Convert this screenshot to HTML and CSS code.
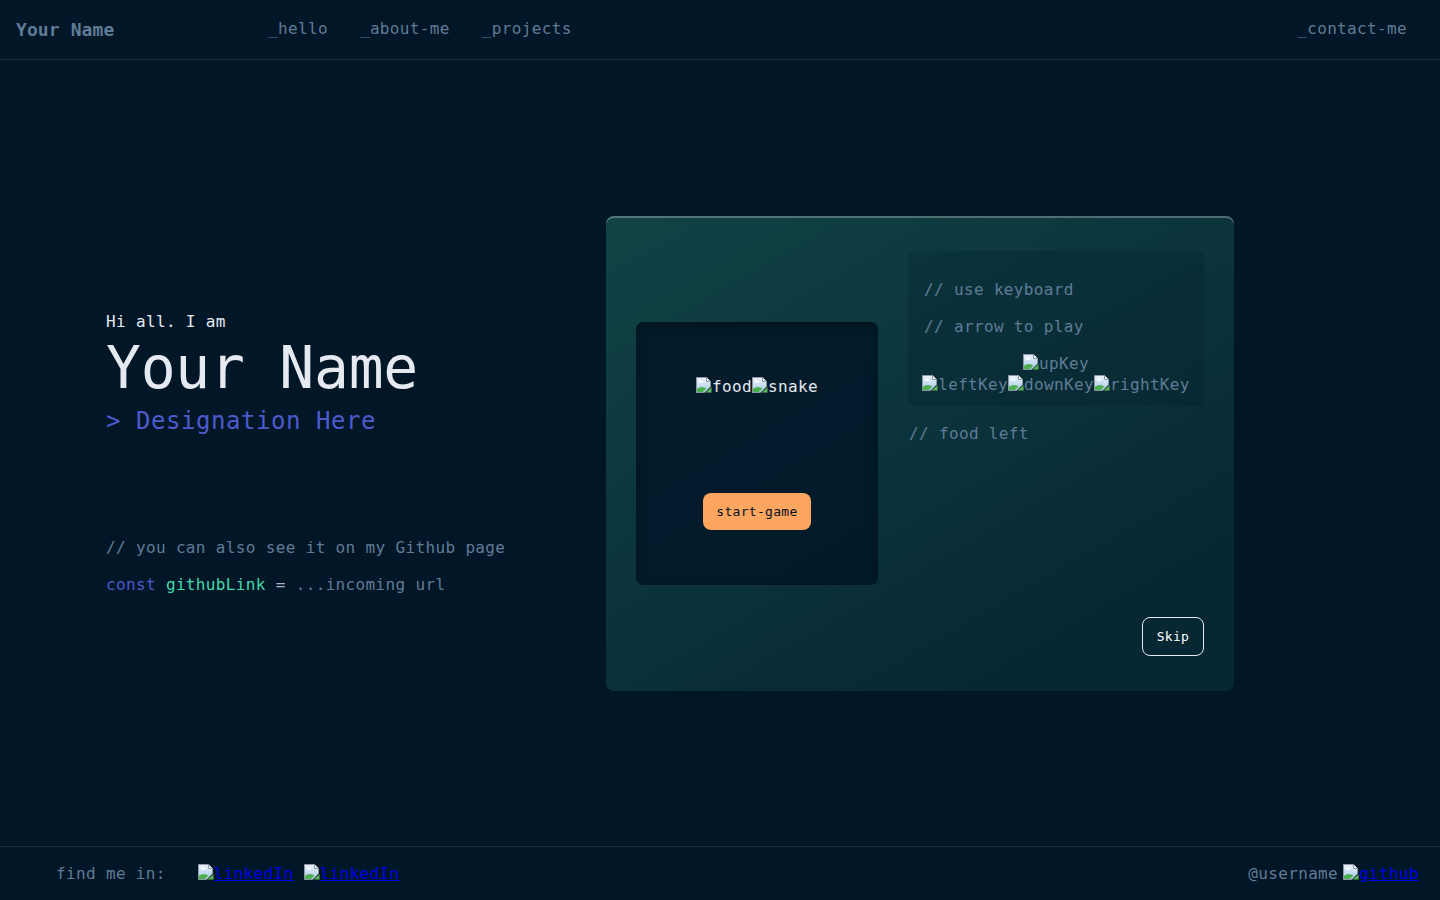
FILE: index.html
```html
<!DOCTYPE html>
<html lang="en">
<head>
<meta charset="utf-8">
<title>Your Name</title>
<link rel="stylesheet" href="styles.css">
</head>
<body>
<svg class="defs" width="0" height="0" aria-hidden="true">
  <defs>
    <linearGradient id="sky" x1="0" y1="0" x2="0" y2="1">
      <stop offset="0" stop-color="#e9f2fb"/>
      <stop offset="1" stop-color="#a9cbe9"/>
    </linearGradient>
    <symbol id="bi" viewBox="0 0 16 16">
      <path d="M0.5 0.5H10.5L14.5 4.5V9.8L8.3 15.5H0.5Z" fill="url(#sky)" stroke="#8d9aa6"/>
      <path d="M10.5 0.5V4.5H14.5" fill="#f4f7fa" stroke="#8d9aa6"/>
      <ellipse cx="5.2" cy="4.6" rx="2.4" ry="1.2" fill="#ffffff"/>
      <path d="M1 15V11.8Q4.5 9.2 8.5 10.6L10.4 11.4L6.9 15Z" fill="#4caf50"/>
      <path d="M9.6 15.5L15.5 10.2V15.5Z" fill="#5cb85c" stroke="#3a6b3a" stroke-width="0.6"/>
    </symbol>
  </defs>
</svg>

<header class="topbar">
  <div class="logo">Your Name</div>
  <nav class="nav">
    <a class="nav-link" href="#">_hello</a>
    <a class="nav-link" href="#">_about-me</a>
    <a class="nav-link" href="#">_projects</a>
  </nav>
  <a class="nav-link contact" href="#">_contact-me</a>
</header>

<main class="main">
  <section class="hero">
    <p class="hello">Hi all. I am</p>
    <h1 class="name">Your Name</h1>
    <p class="role">&gt; Designation Here</p>
    <p class="comment first">// you can also see it on my Github page</p>
    <p class="code"><span class="kw">const</span> <span class="var">githubLink</span> <span class="eq">=</span> <span class="str">...incoming url</span></p>
  </section>

  <section class="game">
    <div class="screen">
      <div class="sprites"><span class="alt"><svg class="bimg"><use href="#bi"/></svg>food</span><span class="alt"><svg class="bimg"><use href="#bi"/></svg>snake</span></div>
      <button class="start">start-game</button>
    </div>
    <div class="side">
      <div class="side-top">
        <div class="panel">
          <p class="comment">// use keyboard</p>
          <p class="comment second">// arrow to play</p>
          <div class="keys">
            <div class="key-row"><span class="alt"><svg class="bimg"><use href="#bi"/></svg>upKey</span></div>
            <div class="key-row"><span class="alt"><svg class="bimg"><use href="#bi"/></svg>leftKey</span><span class="alt"><svg class="bimg"><use href="#bi"/></svg>downKey</span><span class="alt"><svg class="bimg"><use href="#bi"/></svg>rightKey</span></div>
          </div>
        </div>
        <p class="comment food-left">// food left</p>
      </div>
      <button class="skip">Skip</button>
    </div>
  </section>
</main>

<footer class="footer">
  <div class="find">
    <span class="find-label">find me in:</span>
    <a class="social" href="#"><svg class="bimg"><use href="#bi"/></svg><span class="link-text">linkedIn</span></a>
    <a class="social" href="#"><svg class="bimg"><use href="#bi"/></svg><span class="link-text">linkedIn</span></a>
  </div>
  <div class="user">
    <span class="find-label">@username</span>
    <a class="social" href="#"><svg class="bimg"><use href="#bi"/></svg><span class="link-text">github</span></a>
  </div>
</footer>
</body>
</html>
```

FILE: styles.css
```css
* { box-sizing: border-box; }

html, body { height: 100%; }

body {
  margin: 0;
  background: #011627;
  color: #607b96;
  font-family: "DejaVu Sans Mono", "Liberation Mono", monospace;
  font-size: 16px;
  letter-spacing: 0.35px;
  display: flex;
  flex-direction: column;
  overflow: hidden;
}

.defs { position: absolute; width: 0; height: 0; overflow: hidden; }

p { margin: 0; }

/* header */
.topbar {
  height: 60px;
  flex: none;
  display: flex;
  align-items: center;
  padding: 0 16px 1px;
  border-bottom: 1px solid #1e2d3d;
}
.logo {
  width: 236px;
  font-size: 18px;
  font-weight: bold;
  letter-spacing: 0.1px;
  color: #607b96;
}
.nav { display: flex; flex: 1; }
.nav-link {
  color: #607b96;
  text-decoration: none;
  padding: 0 16px;
  line-height: 24px;
}
.contact { padding-right: 17px; }

/* main */
.main {
  flex: 1;
  display: flex;
  align-items: center;
  padding-left: 106px;
}
.hero { width: 500px; }
.hello {
  color: #e5e9f0;
  line-height: 24px;
}
.name {
  margin: 5px 0 0;
  font-size: 58px;
  line-height: 58px;
  font-weight: normal;
  letter-spacing: -0.25px;
  color: #e5e9f0;
}
.role {
  margin-top: 8px;
  font-size: 24px;
  line-height: 32px;
  letter-spacing: 0.55px;
  color: #4d5bce;
}
.comment {
  color: #607b96;
  line-height: 24px;
}
.comment.first { margin-top: 99px; }
.code { margin-top: 13px; line-height: 24px; }
.kw { color: #4d5bce; }
.var { color: #43d9ad; }
.eq { color: #a9b4c2; }
.str { color: #607b96; }

/* game card */
.game {
  width: 628px;
  height: 475px;
  flex: none;
  display: flex;
  gap: 30px;
  padding: 35px 30px;
  border-radius: 8px;
  background: linear-gradient(150deg, rgba(23, 85, 83, 0.7) 2%, rgba(67, 217, 173, 0.09) 82%);
  box-shadow: inset 0 2px 0 rgba(255, 255, 255, 0.28);
}
.screen {
  width: 242px;
  height: 263px;
  align-self: center;
  flex: none;
  border-radius: 8px;
  background: rgba(1, 22, 39, 0.84);
  box-shadow: inset 1px 5px 11px rgba(2, 18, 27, 0.71);
  display: flex;
  flex-direction: column;
  align-items: center;
  padding-top: 53px;
}
.sprites {
  line-height: 24px;
  color: #e5e9f0;
}
.alt { white-space: nowrap; }
.bimg {
  width: 16px;
  height: 16px;
  vertical-align: -1px;
}
.start {
  margin-top: 94px;
  height: 37px;
  padding: 0 13px;
  border: none;
  border-radius: 8px;
  background: #fea55f;
  color: #01121f;
  font-family: inherit;
  font-size: 13px;
  letter-spacing: 0.3px;
}

.side {
  width: 296px;
  flex: none;
  min-width: 0;
  display: flex;
  flex-direction: column;
  justify-content: space-between;
}
.panel {
  border-radius: 8px;
  background: rgba(1, 20, 35, 0.19);
  padding: 27px 14px 11px 16px;
}
.panel .second { margin-top: 13px; }
.keys {
  margin: 14px -14px 0 -16px;
  color: #607b96;
  text-align: center;
  line-height: 21px;
}
.key-row { white-space: nowrap; }
.food-left { margin: 16px 0 0 1px; }
.skip {
  align-self: flex-end;
  width: 62px;
  height: 39px;
  padding: 0;
  border: 1px solid #e5e9f0;
  border-radius: 8px;
  background: transparent;
  color: #ffffff;
  font-family: inherit;
  font-size: 13px;
  letter-spacing: 0.3px;
}

/* footer */
.footer {
  height: 54px;
  flex: none;
  border-top: 1px solid #1e2d3d;
  display: flex;
  align-items: center;
  justify-content: space-between;
  padding: 0 21px 0 56px;
}
.find, .user { display: flex; align-items: center; }
.find-label { color: #607b96; }
.find .find-label { margin-right: 32px; }
.find .social + .social { margin-left: 10px; }
.user .social { margin-left: 5px; }
.social {
  color: #0000ee;
  text-decoration: none;
  line-height: 24px;
}
.link-text { text-decoration: underline; }
```
